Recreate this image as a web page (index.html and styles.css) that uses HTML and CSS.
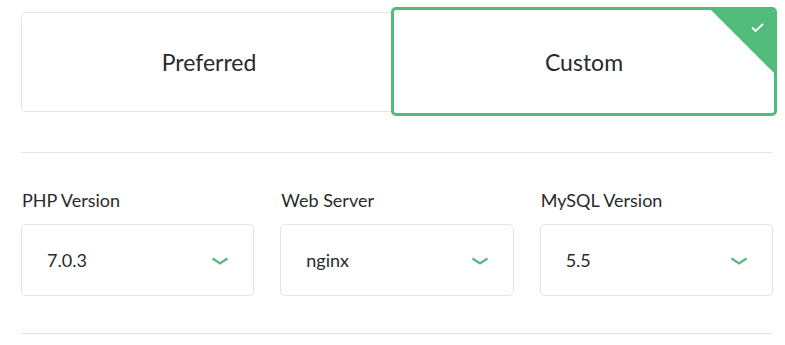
FILE: index.html
```html
<!DOCTYPE html>
<html lang="en">
<head>
<meta charset="UTF-8">
<meta name="viewport" content="width=device-width, initial-scale=1">
<title>Server setup</title>
<link rel="stylesheet" href="styles.css">
</head>
<body>
<div class="wrapper">

  <div class="choices">
    <div class="choice">Preferred</div>
    <div class="choice selected">
      Custom
      <span class="corner">
        <svg width="13" height="9" viewBox="0 0 13 9"><path d="M1 4.5 L4.6 8 L12 1" fill="none" stroke="#fff" stroke-width="1.8"/></svg>
      </span>
    </div>
  </div>

  <hr class="divider">

  <div class="fields">
    <div class="field">
      <div class="label">PHP Version</div>
      <div class="select">
        <span>7.0.3</span>
        <svg class="chevron" width="18" height="8" viewBox="0 0 18 8"><path d="M1.5 1.5 L9 6.5 L16.5 1.5" fill="none" stroke="#52bb7b" stroke-width="2.2"/></svg>
      </div>
    </div>
    <div class="field">
      <div class="label">Web Server</div>
      <div class="select">
        <span>nginx</span>
        <svg class="chevron" width="18" height="8" viewBox="0 0 18 8"><path d="M1.5 1.5 L9 6.5 L16.5 1.5" fill="none" stroke="#52bb7b" stroke-width="2.2"/></svg>
      </div>
    </div>
    <div class="field">
      <div class="label">MySQL Version</div>
      <div class="select">
        <span>5.5</span>
        <svg class="chevron" width="18" height="8" viewBox="0 0 18 8"><path d="M1.5 1.5 L9 6.5 L16.5 1.5" fill="none" stroke="#52bb7b" stroke-width="2.2"/></svg>
      </div>
    </div>
  </div>

  <hr class="divider bottom">

</div>
</body>
</html>
```

FILE: styles.css
```css
:root {
  --line: #e4e4e4;
  --green: #52bb7b;
}

body {
  margin: 0;
  font-family: Lato, "Open Sans", sans-serif;
  color: #2a2a2a;
  background: #fff;
}

.wrapper {
  width: 752px;
  padding: 12px 0 0 21px;
}

/* 上のカード */
.choices {
  display: grid;
  grid-template-columns: 1fr 1fr;
}

.choice {
  position: relative;
  height: 100px;
  box-sizing: border-box;
  display: flex;
  align-items: center;
  justify-content: center;
  border: 1px solid var(--line);
  border-radius: 5px;
  font-size: 23px;
  background: #fff;
}

.choice.selected {
  height: auto;
  margin: -5px -4px -4px -6px;
  border: 3px solid var(--green);
  overflow: hidden;
}

.corner {
  position: absolute;
  top: 0;
  right: 0;
  width: 63px;
  height: 63px;
  background: var(--green);
  clip-path: polygon(0 0, 100% 0, 100% 100%);
}

.corner svg {
  position: absolute;
  top: 13px;
  right: 10px;
}

.divider {
  margin: 40px 0 0;
  width: 751px;
  border: none;
  border-top: 1px solid var(--line);
}

.divider.bottom {
  margin-top: 37px;
}

/* セレクト */
.fields {
  display: grid;
  grid-template-columns: repeat(3, 1fr);
  gap: 26px;
  margin-top: 37px;
}

.label {
  font-size: 18px;
  line-height: 20px;
  padding-left: 1px;
  margin-bottom: 14px;
}

.select {
  height: 72px;
  box-sizing: border-box;
  border: 1px solid var(--line);
  border-radius: 5px;
  display: flex;
  align-items: center;
  justify-content: space-between;
  padding: 0 24px 0 25px;
  font-size: 18px;
}

.chevron {
  display: block;
  margin-top: 1px;
}
```
